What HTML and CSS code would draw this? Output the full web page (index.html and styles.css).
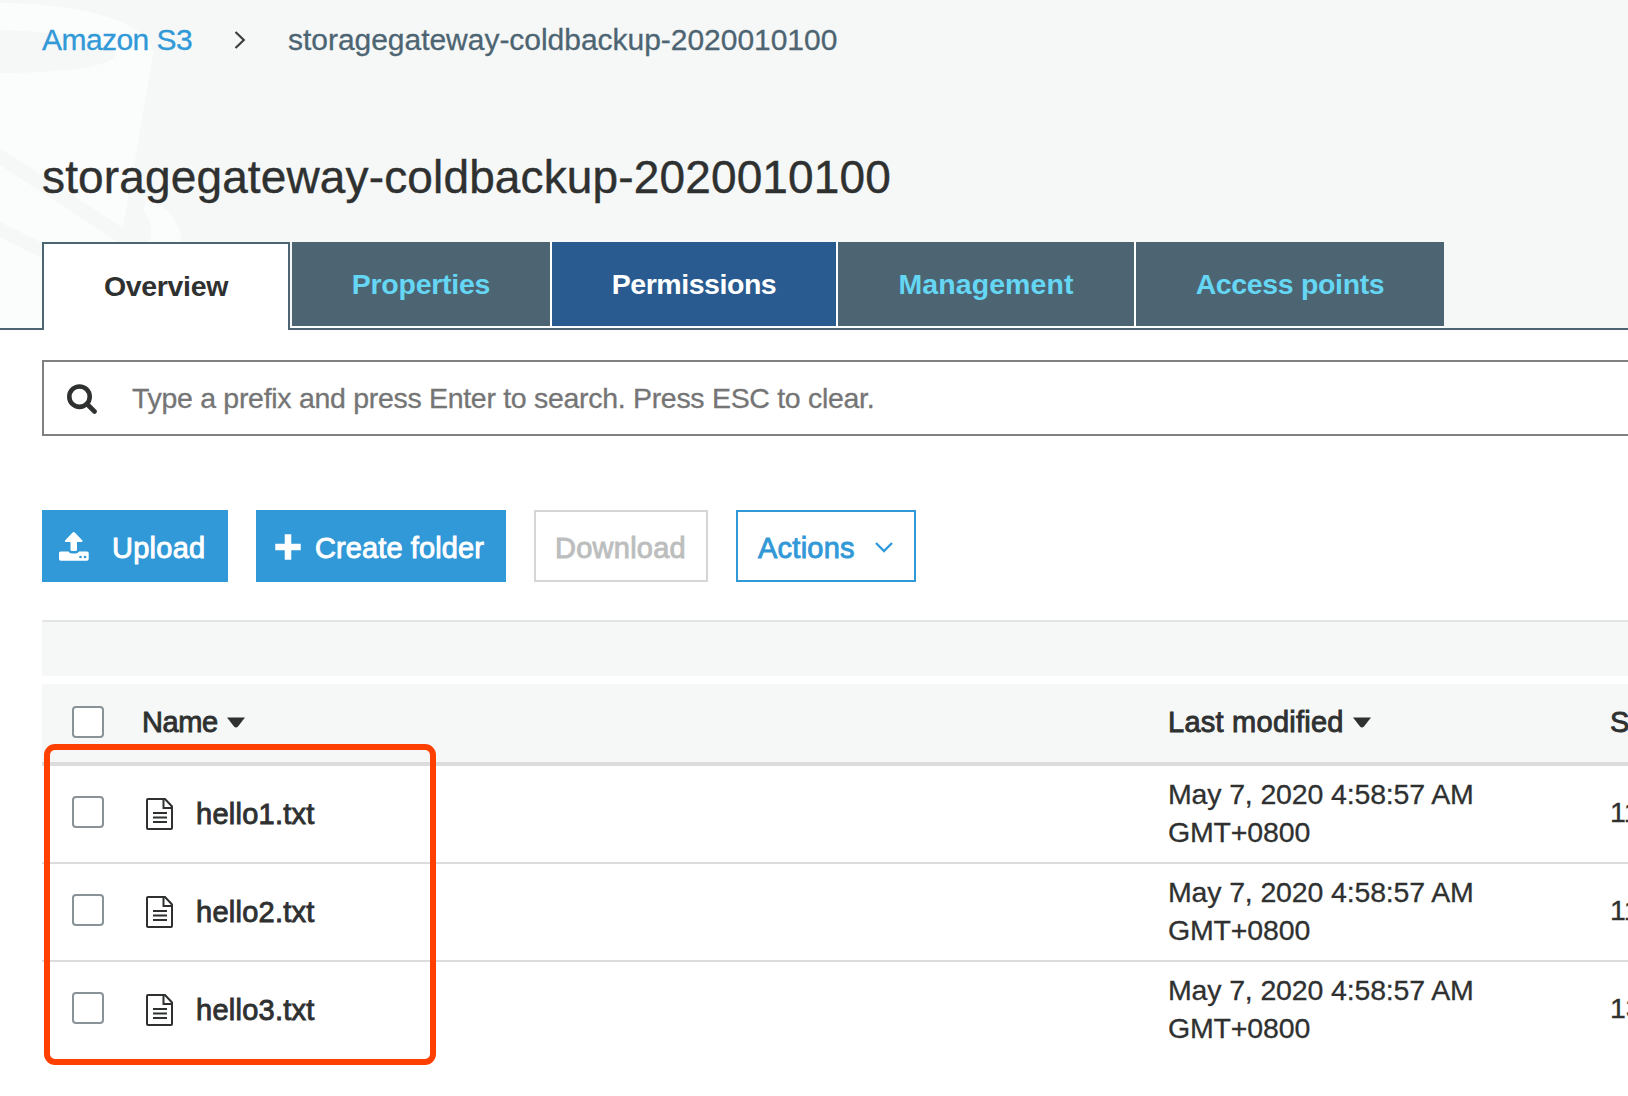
FILE: index.html
```html
<!DOCTYPE html>
<html lang="en">
<head>
<meta charset="utf-8">
<title>storagegateway-coldbackup-2020010100</title>
<link rel="stylesheet" href="styles.css">
</head>
<body>
<svg width="0" height="0" class="defs">
  <symbol id="file" viewBox="0 0 28 32">
    <path d="M2 1h17L26 8.500V30q0 1-1 1H2q-1 0-1-1V2q0-1 1-1z" fill="none" stroke="#2f3131" stroke-width="2"/>
    <path d="M17.500 1v9H26" fill="none" stroke="#2f3131" stroke-width="2"/>
    <path d="M7 15h14M7 19.500h14M7 24h14" stroke="#2f3131" stroke-width="2.200"/>
  </symbol>
  <symbol id="caret" viewBox="0 0 18 11"><path d="M0 .5h18L11 9.600q-2 1.800-4 0z" fill="#2f3131"/></symbol>
</svg>
<header class="top">
  <svg class="bucket" width="190" height="328" viewBox="0 0 190 328">
    <path d="M0 3C80 3 152 22 153 54L123 228 0 148z" fill="#fbfdfd"/>
    <path d="M0 30C60 32 115 41 115 54S60 73 0 73z" fill="#f6f8f8"/>
    <path d="M0 165L118 242V328H0z" fill="#fbfdfd"/>
    <path d="M0 222L46 245V260L0 237z" fill="#f6f8f8"/>
    <path d="M147 199Q183 212 182 250H146Q158 228 143 210z" fill="#fbfdfd"/>
  </svg>
  <nav class="crumbs">
    <a class="home">Amazon S3</a>
    <svg class="sep" width="12" height="20" viewBox="0 0 12 20"><path d="M1.500 2L9.800 10 1.500 18" fill="none" stroke="#3c3f3f" stroke-width="2.200"/></svg>
    <span class="here">storagegateway-coldbackup-2020010100</span>
  </nav>
  <h1 class="title">storagegateway-coldbackup-2020010100</h1>
  <div class="tabs">
    <a class="tab active">Overview</a>
    <a class="tab t2">Properties</a>
    <a class="tab t3">Permissions</a>
    <a class="tab t4">Management</a>
    <a class="tab t5">Access points</a>
  </div>
</header>
<main class="main">
  <div class="search">
    <svg class="glass" width="30" height="30" viewBox="0 0 30 30"><circle cx="12.500" cy="12.700" r="10.200" fill="none" stroke="#2f3131" stroke-width="4.600"/><path d="M20 20l7.500 7.500" stroke="#2f3131" stroke-width="4.600" stroke-linecap="round"/></svg>
    <span class="hint">Type a prefix and press Enter to search. Press ESC to clear.</span>
  </div>
  <div class="actions">
    <a class="btn solid upload">
      <svg width="30" height="30" viewBox="0 0 30 30"><path d="M14.700 0Q15.400 0 16 .7L23.400 8.500Q24 10 22.500 10H18V17.500Q18 19 16.500 19H13Q11.500 19 11.500 17.500V10H7Q5.300 10 6 8.500L13.400.7Q14 0 14.700 0z" fill="#fff"/><path d="M1.500 19.500H9.500Q10.500 21.500 13 21.500H16.500Q19 21.500 20 19.500H28Q29.700 19.500 29.700 21V27Q29.700 28.700 28 28.700H1.700Q0 28.700 0 27V21Q0 19.500 1.500 19.500z" fill="#fff"/><circle cx="21.500" cy="25" r="1.300" fill="#3199d7"/><circle cx="26" cy="25" r="1.300" fill="#3199d7"/></svg>
      <span>Upload</span>
    </a>
    <a class="btn solid create">
      <svg width="26" height="26" viewBox="0 0 26 26"><path d="M13 3.500v19M3.500 13h19" stroke="#fff" stroke-width="6.500" stroke-linecap="square"/></svg>
      <span>Create folder</span>
    </a>
    <a class="btn disabled"><span>Download</span></a>
    <a class="btn outline"><span>Actions</span>
      <svg width="18" height="11" viewBox="0 0 18 11"><path d="M1 1l8 8 8-8" fill="none" stroke="#3199d7" stroke-width="2.300"/></svg>
    </a>
  </div>
  <div class="strip"></div>
  <div class="row head">
    <i class="check"></i>
    <div class="name"><span>Name</span><svg width="18" height="11"><use href="#caret"/></svg></div>
    <div class="date"><span>Last modified</span><svg width="18" height="11"><use href="#caret"/></svg></div>
    <div class="size">Size</div>
  </div>
  <div class="row">
    <i class="check"></i>
    <div class="name"><svg class="file" width="28" height="32"><use href="#file"/></svg><span>hello1.txt</span></div>
    <div class="date">May 7, 2020 4:58:57 AM<br>GMT+0800</div>
    <div class="size">11</div>
  </div>
  <div class="row">
    <i class="check"></i>
    <div class="name"><svg class="file" width="28" height="32"><use href="#file"/></svg><span>hello2.txt</span></div>
    <div class="date">May 7, 2020 4:58:57 AM<br>GMT+0800</div>
    <div class="size">11</div>
  </div>
  <div class="row last">
    <i class="check"></i>
    <div class="name"><svg class="file" width="28" height="32"><use href="#file"/></svg><span>hello3.txt</span></div>
    <div class="date">May 7, 2020 4:58:57 AM<br>GMT+0800</div>
    <div class="size">13</div>
  </div>
</main>
<div class="highlight"></div>
</body>
</html>
```
FILE: styles.css
```css
* { box-sizing: border-box; }
html, body { margin: 0; height: 1096px; overflow: hidden; }
body { position: relative; background: #fff; color: #2f3131; font-family: "Liberation Sans", Arial, sans-serif; font-size: 28.5px; }
svg { flex: none; display: block; }
.defs { position: absolute; }
.top { position: relative; height: 330px; background: #f6f8f8; border-bottom: 2px solid #4d6572; }
.bucket { position: absolute; left: 0; top: 0; }
.crumbs { position: relative; display: flex; align-items: center; height: 80px; padding-left: 42px; font-size: 30px; line-height: 80px; -webkit-text-stroke: .3px currentColor; }
.home { width: 191.500px; color: #3199d7; letter-spacing: -.55px; }
.sep { margin-right: 42.500px; }
.here { color: #4d6572; letter-spacing: -.03px; white-space: nowrap; }
.title { position: relative; margin: 0 0 0 42px; height: 162px; padding-top: 67px; font-size: 46px; line-height: 60px; font-weight: 400; letter-spacing: .14px; white-space: nowrap; -webkit-text-stroke: .4px currentColor; }
.tabs { position: relative; display: flex; gap: 2px; padding-left: 42px; }
.tab { height: 84px; line-height: 84px; background: #4d6572; color: #65d6f3; font-weight: 700; font-size: 28.5px; text-align: center; white-space: nowrap; box-shadow: 2px 0 #fff, 0 2px #fff, 2px 2px #fff; }
.tab:last-child { box-shadow: 0 2px #fff; }
.active { width: 248px; height: 88px; border: 2px solid #4d6572; border-bottom: 0; background: #fff; color: #2f3131; box-shadow: none; letter-spacing: -.35px; }
.t2 { width: 258px; letter-spacing: -.25px; }
.t3 { width: 284px; background: #295b90; color: #fff; letter-spacing: -.45px; }
.t4 { width: 296px; letter-spacing: .1px; }
.t5 { width: 308px; letter-spacing: -.35px; }
.main { padding: 30px 0 0 42px; }
.search { display: flex; align-items: center; height: 76px; border: 2px solid #808080; border-right: 0; padding-left: 23px; }
.glass { margin: 1px 35px 0 0; }
.hint { color: #757575; letter-spacing: -.3px; white-space: nowrap; -webkit-text-stroke: .3px currentColor; }
.actions { display: flex; gap: 28px; height: 184px; padding-top: 74px; }
.btn { display: flex; align-items: center; height: 72px; font-size: 29px; letter-spacing: .25px; white-space: nowrap; -webkit-text-stroke: .9px currentColor; padding-top: 5px; }
.btn svg { margin-bottom: 3px; }
.solid { background: #3199d7; color: #fff; }
.upload { width: 186px; padding-left: 17px; gap: 23px; }
.create { width: 250px; padding-left: 19px; gap: 14px; letter-spacing: .1px; }
.disabled { width: 174px; border: 2px solid #d5d6d6; color: #bcbebe; padding-left: 19px; }
.outline { width: 180px; border: 2px solid #3199d7; color: #3199d7; padding-left: 20px; gap: 20px; }
.strip { height: 56px; border-top: 2px solid #e3e5e5; background: #f6f8f8; margin-bottom: 8px; }
.row { display: grid; grid-template-columns: 99px 1027px 442px 60px; height: 98px; border-bottom: 2px solid #dcdcdc; }
.last { border: 0; }
.head { height: 82px; border-bottom: 4px solid #dcdcdc; background: #f6f8f8; }
.check { display: block; width: 32px; height: 32px; margin: 30px 0 0 30px; border: 2px solid #899297; border-radius: 4px; background: #fff; }
.head .check { margin-top: 22px; }
.name { display: flex; align-items: flex-start; }
.name span, .head .date, .head .size { font-size: 29px; letter-spacing: .25px; -webkit-text-stroke: .9px currentColor; }
.name span { line-height: 38px; padding-top: 29px; }
.head .name span { padding: 19px 0 0 1px; letter-spacing: -.4px; }
.name .file { margin: 32px 22px 0 5px; }
.head svg { margin: 33px 0 0 9px; }
.date { padding-top: 9px; line-height: 38px; letter-spacing: -.15px; white-space: nowrap; -webkit-text-stroke: .3px currentColor; }
.head .date { display: flex; padding-top: 0; }
.head .date span { padding-top: 19px; }
.size { padding-top: 27px; line-height: 38px; -webkit-text-stroke: .3px currentColor; }
.head .size { padding-top: 19px; }
.highlight { position: absolute; left: 44px; top: 744px; width: 392px; height: 321px; border: 6px solid #ff4000; border-radius: 11px; }
```
